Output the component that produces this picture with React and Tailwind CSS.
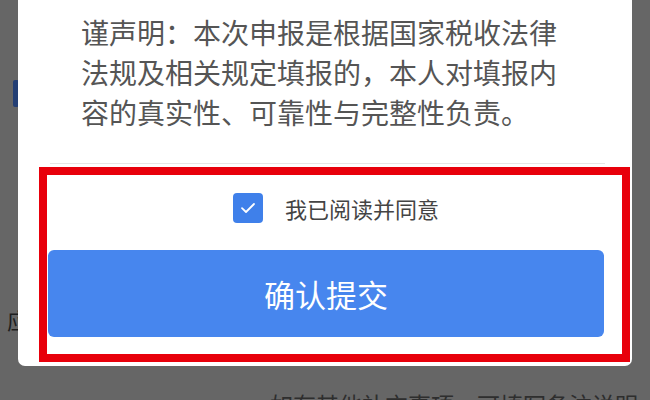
import React from "react";

export default function App() {
  return (
    <div
      className="relative w-[650px] h-[400px] overflow-hidden bg-[#666666]"
      style={{ fontFamily: '"Noto Sans CJK SC", "Noto Sans", sans-serif' }}
    >
      {/* background page (dimmed) */}
      <div className="flex flex-col">
        <div className="mt-[80px] ml-[13px] w-[6px] h-[27px] rounded-[2px] bg-[#243f74]" />
        <div className="mt-[201px] ml-[7px] text-[22px] leading-[22px] text-[#1e1e1e]">应</div>
        <div className="mt-[63px] pl-[270px] whitespace-nowrap text-[23px] leading-[23px] text-[#2e2e2e]">
          如有其他补充事项，可填写备注说明
        </div>
      </div>

      {/* modal */}
      <div className="absolute top-0 left-[18px] w-[614px] h-[366px] bg-white rounded-b-[7px] flex flex-col">
        <p className="mt-[12px] ml-[63px] w-[482px] text-[28px] leading-[40px] text-[#555555]">
          谨声明：本次申报是根据国家税收法律法规及相关规定填报的，本人对填报内容的真实性、可靠性与完整性负责。
        </p>
        <div className="mt-[31px] ml-[32px] w-[555px] h-px bg-[#e6e6e6]" />
        <div className="mt-[3px] ml-[21px] w-[591px] h-[195px] border-[8px] border-[#e8000b] flex flex-col">
          <div className="mt-[18px] pl-[186px] flex items-center">
            <div className="w-[30px] h-[30px] rounded-[4px] bg-[#3f80ea] flex items-center justify-center">
              <svg width="16" height="12" viewBox="0 0 16 12" fill="none">
                <path d="M2 6.2 L6 10 L14 2" stroke="white" strokeWidth="1.8" strokeLinecap="round" strokeLinejoin="round" />
              </svg>
            </div>
            <span className="ml-[22px] text-[22px] leading-[30px] text-[#444444]">我已阅读并同意</span>
          </div>
          <div className="mt-[27px] ml-px w-[556px] h-[87px] rounded-[6px] bg-[#4786ee] flex items-center justify-center">
            <span className="text-[31px] leading-none text-white">确认提交</span>
          </div>
        </div>
      </div>
    </div>
  );
}
